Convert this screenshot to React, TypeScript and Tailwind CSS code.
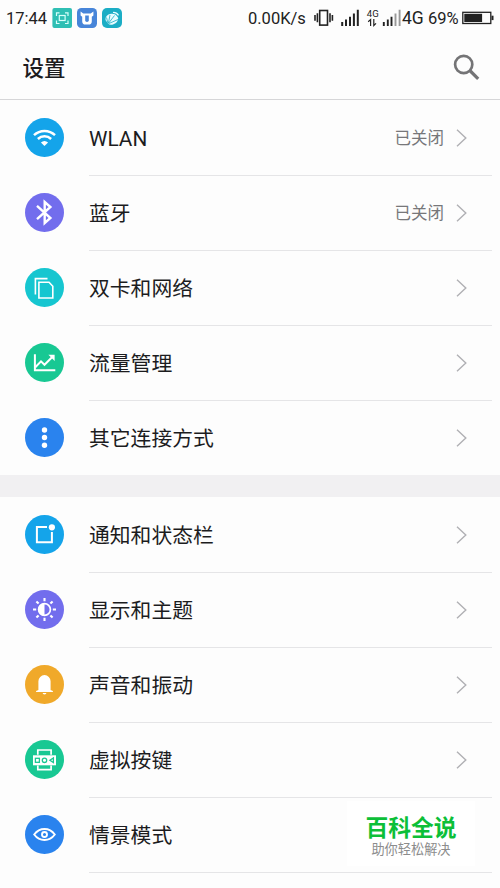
import React from 'react';

interface SettingItem {
  title: string;
  color: string;
  icon: React.ReactNode;
  status?: string;
}

// --- Row icons, all drawn on a 39px disc ---

const WifiIcon = () => (
  <g fill="none" stroke="#fff" strokeWidth="2.5">
    <path d="M9 17.2a15.2 15.2 0 0 1 21 0" />
    <path d="M12.9 21a9.6 9.6 0 0 1 13.2 0" />
    <path d="M15.9 24.6a5.4 5.4 0 0 1 7.2 0L19.5 28z" fill="#fff" stroke="none" />
  </g>
);

const BluetoothIcon = () => (
  <path d="M12 12.8 25.4 25 19.7 30V9L25.4 14 12 26.2" fill="none" stroke="#fff" strokeWidth="2.4" />
);

const CardsIcon = () => (
  <g fill="none" stroke="#fff" strokeWidth="1.6">
    <path d="M10.4 26.5V10.6H22.5" />
    <path d="M13.9 14.2H24L27.8 18.3V30H13.9z" />
  </g>
);

const ChartIcon = () => (
  <g fill="none" stroke="#fff" strokeWidth="2">
    <path d="M9.9 11.3V27.2H30.3" />
    <path d="M10.3 24.3 16 18.4 19.5 21.8 27.5 13.8" />
    <path d="M23.4 11.8H29.6V18z" fill="#fff" stroke="none" />
  </g>
);

const DotsIcon = () => (
  <g fill="#fff">
    <circle cx="19.5" cy="12" r="2.7" />
    <circle cx="19.5" cy="19.5" r="2.7" />
    <circle cx="19.5" cy="27.2" r="2.7" />
  </g>
);

const NoticeIcon = () => (
  <g>
    <path d="M22 11.9H11.9V27.2H26.9V17" fill="none" stroke="#fff" strokeWidth="2" />
    <circle cx="26.9" cy="12.3" r="3.1" fill="#fff" />
  </g>
);

const BrightnessIcon = () => (
  <g stroke="#fff" strokeWidth="2.1" fill="none">
    <circle cx="19.5" cy="19.5" r="5.9" strokeWidth="1.7" />
    <path d="M19.5 13.2a6.3 6.3 0 0 0 0 12.6z" fill="#fff" stroke="none" />
    <path d="M19.5 8V11.2M19.5 27.8V31M8 19.5H11.2M27.8 19.5H31M11.4 11.4 13.6 13.6M25.4 25.4 27.6 27.6M11.4 27.6 13.6 25.4M25.4 13.6 27.6 11.4" />
  </g>
);

const BellIcon = () => (
  <g fill="#fff">
    <path d="M13.4 25V16.2a6.1 6.1 0 0 1 12.2 0V25L27.9 26V27.1H11.1V26z" />
    <path d="M17.6 28H21.4a1.9 1.5 0 0 1-3.8 0z" />
  </g>
);

const KeysIcon = () => (
  <g fill="none" stroke="#fff" strokeWidth="1.7">
    <path d="M12.8 14.8V10H26.1V14.8M12.8 25.6V29.6H26.1V25.6" />
    <rect x="8" y="15.3" width="23" height="10" fill="#fff" stroke="none" />
    <g stroke="#18c893" strokeWidth="1.3">
      <rect x="10.4" y="18.3" width="4" height="4" />
      <circle cx="19.5" cy="20.3" r="2.2" />
      <path d="M28.4 18V22.6L24.9 20.3z" />
    </g>
  </g>
);

const EyeIcon = () => (
  <g fill="none" stroke="#fff" strokeWidth="1.9">
    <path d="M9.2 19.5C14.6 12.1 24.4 12.1 29.8 19.5C24.4 26.9 14.6 26.9 9.2 19.5z" />
    <circle cx="19.5" cy="19.5" r="2.5" />
  </g>
);

const connectionItems: SettingItem[] = [
  { title: 'WLAN', color: '#14a4ea', icon: <WifiIcon />, status: '已关闭' },
  { title: '蓝牙', color: '#726ded', icon: <BluetoothIcon />, status: '已关闭' },
  { title: '双卡和网络', color: '#16c6d0', icon: <CardsIcon /> },
  { title: '流量管理', color: '#18c893', icon: <ChartIcon /> },
  { title: '其它连接方式', color: '#2a83ee', icon: <DotsIcon /> },
];

const deviceItems: SettingItem[] = [
  { title: '通知和状态栏', color: '#14a4ea', icon: <NoticeIcon /> },
  { title: '显示和主题', color: '#726ded', icon: <BrightnessIcon /> },
  { title: '声音和振动', color: '#f0a92a', icon: <BellIcon /> },
  { title: '虚拟按键', color: '#18c893', icon: <KeysIcon /> },
  { title: '情景模式', color: '#2a83ee', icon: <EyeIcon /> },
];

const StatusBar = () => (
  <div className="flex h-9 shrink-0 items-center pl-[6px] text-[16.5px] leading-9 text-[#222]">
    <span className="w-[46px] pt-px whitespace-nowrap">17:44</span>
    <svg width="71" height="20" viewBox="0 0 71 20" className="-mt-px shrink-0">
      <rect x="0.4" y="0" width="19.6" height="20" rx="2" fill="#2fbfb4" />
      <g fill="none" stroke="#d8fffa" strokeWidth="1.2">
        <path d="M4.5 8V4.8H7.5M13 4.8H16V8M16 12.5V15.5H13M7.5 15.5H4.5V12.5" />
        <rect x="7.3" y="7.5" width="5.8" height="5" />
      </g>
      <rect x="25" y="0" width="20" height="20" rx="4.5" fill="#4785d9" />
      <path d="M28.6 3.6 31.3 5.5H38.7L41.4 3.6V7.5L39.8 8.8V13.2Q39.8 16.6 36.5 16.6H33.5Q30.2 16.6 30.2 13.2V8.8L28.6 7.5z" fill="#fff" />
      <path d="M33.2 7.6H36.8V12.2Q36.8 14 35 14Q33.2 14 33.2 12.2z" fill="#4785d9" />
      <rect x="50" y="0" width="20" height="20" rx="5" fill="#1badc5" />
      <path d="M53.5 12Q53 7 59 5.8Q64 5.2 66.2 10Q66 15 61.5 16.2Q58 17.5 56 15.5z" fill="#e8fcff" />
      <path d="M56 15.5 54.5 9.5M56.4 15.3 58 7M56.6 15.2 62.5 7.5M57 15.5 66 11.5" stroke="#1badc5" strokeWidth="0.8" />
      <path d="M61 4.5Q64.5 4.2 66.5 7.4" fill="none" stroke="#e8fcff" strokeWidth="1.2" />
    </svg>
    <span className="ml-[125px] w-[66px] pt-px whitespace-nowrap">0.00K/s</span>
    <svg width="88" height="24" viewBox="314 5.5 88 24" className="shrink-0">
      <rect x="319.7" y="10" width="7.8" height="14.6" fill="none" stroke="#222" strokeWidth="1.6" />
      <path d="M315 14.5V20.3M317.4 12.7V21.8M330 12.7V21.8M332.4 14.5V20.3" stroke="#222" strokeWidth="1.6" />
      <path d="M342.2 21.5V25.5M346 19V25.5M350 16.3V25.5M353.9 13V25.5M357.8 9.3V25.5" stroke="#222" strokeWidth="2" />
      <text x="366.8" y="16" fontSize="9.6" fontFamily="Roboto" fill="#222">4G</text>
      <path d="M370.6 25.5V19L368.2 21.2M373.8 18.5V25L376 22.8" stroke="#222" strokeWidth="1.2" fill="none" />
      <path d="M383.8 21.5V25.5M387.8 19V25.5M391.5 16.3V25.5" stroke="#222" strokeWidth="1.9" />
      <path d="M395.5 13V25.5M399.6 9.3V25.5" stroke="#999" strokeWidth="1.9" />
    </svg>
    <span className="w-[26px] whitespace-nowrap text-[17.5px]">4G</span>
    <span className="w-[34px] pt-px whitespace-nowrap">69%</span>
    <svg width="33" height="14" viewBox="0 0 33 14" className="-mt-px shrink-0">
      <rect x="0.8" y="1.3" width="28" height="11.2" fill="none" stroke="#222" strokeWidth="1.3" />
      <rect x="2.3" y="2.8" width="17.8" height="8.2" fill="#222" />
      <rect x="29.5" y="4.7" width="2" height="4.4" fill="#222" />
    </svg>
  </div>
);

const SettingRow = ({ item, last }: { item: SettingItem; last?: boolean }) => (
  <div className="flex h-[75px] shrink-0 pr-2 pl-[25px]">
    <svg width="39" height="39" viewBox="0 0 39 39" className="mt-[18px] shrink-0">
      <circle cx="19.5" cy="19.5" r="19.5" fill={item.color} />
      {item.icon}
    </svg>
    <div className={`ml-[25px] -mb-px flex flex-1 items-center border-b pr-[25px] ${last ? 'border-transparent' : 'border-[#e5e5e7]'}`}>
      <span className="flex-1 pt-[5px] text-[20.8px] text-[#1c1c1e]">{item.title}</span>
      {item.status && <span className="mr-[12px] pt-[3px] text-[16.5px] text-[#77777a]">{item.status}</span>}
      <svg width="11" height="18" viewBox="0 0 11 18" className="mt-px">
        <path d="M1 0.8 9.8 9 1 17.2" fill="none" stroke="#b0b0b4" strokeWidth="1.4" />
      </svg>
    </div>
  </div>
);

const App: React.FC = () => {
  return (
    <div className="relative flex h-[888px] w-[500px] flex-col overflow-hidden bg-[#fdfdfd] font-[Roboto,'Noto_Sans_CJK_SC',sans-serif]">
      <StatusBar />
      <header className="flex h-16 shrink-0 items-center justify-between border-b border-[#d6d6d8] pr-5 pl-[22.5px]">
        <h1 className="pt-[3px] text-[21.5px] font-medium text-[#1c1c1e]">设置</h1>
        <svg width="27" height="27" viewBox="0 0 27 27" className="-mt-px">
          <circle cx="10.7" cy="10.5" r="8.6" fill="none" stroke="#747476" strokeWidth="2.7" />
          <path d="M16.8 16.5 25.2 24.9" stroke="#747476" strokeWidth="3.2" />
        </svg>
      </header>

      {connectionItems.map((item, i) => (
        <SettingRow key={item.title} item={item} last={i === connectionItems.length - 1} />
      ))}
      <div className="h-[22px] shrink-0 bg-[#f1f0f2]" />
      {deviceItems.map((item) => (
        <SettingRow key={item.title} item={item} />
      ))}

      {/* Watermark */}
      <div className="absolute top-[801px] left-[347px] flex h-[65px] w-[128px] flex-col items-center bg-white pt-[14px]">
        <div className="text-[22.8px] leading-[27px] font-bold text-[#0cbf38]">百科全说</div>
        <div className="text-[13.2px] leading-[16px] text-[#8c8c8c]">助你轻松解决</div>
      </div>
    </div>
  );
};

export default App;
